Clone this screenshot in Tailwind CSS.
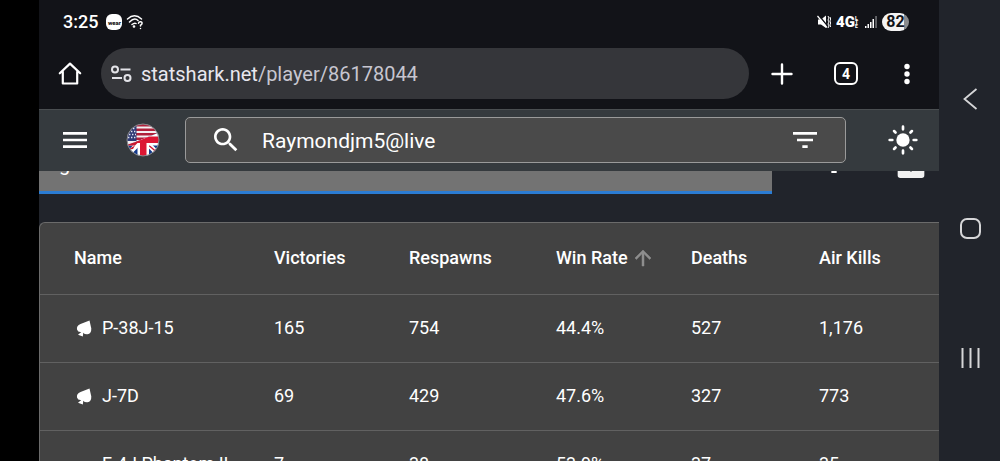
<!DOCTYPE html>
<html lang="en">
<head>
    <meta charset="UTF-8">
    <meta name="viewport" content="width=device-width, initial-scale=1.0">
    <title>StatShark</title>
    <script src="https://cdn.jsdelivr.net/npm/@tailwindcss/browser@4"></script>
</head>
<body class="flex h-screen overflow-hidden bg-black font-['Roboto',sans-serif] text-white">
    <div class="w-[39px] shrink-0 bg-black"></div>

    <div class="flex min-w-0 flex-1 flex-col overflow-hidden bg-[#21242b]">
        <!-- status bar -->
        <div class="flex h-11 shrink-0 items-center justify-between bg-[#121318] pr-[30px] pl-6">
            <div class="flex items-center gap-2">
                <span class="text-lg font-medium">3:25</span>
                <span class="flex size-4 items-center justify-center rounded-md bg-white text-[6px] font-bold text-black">wear</span>
                <svg class="-ml-1 h-4 w-[18px]" viewBox="0 0 18 16" fill="none" stroke="#fff" stroke-width="1.5" stroke-linecap="round">
                    <path d="M1.5 5Q8.500-1.500 15.500 5M3.500 8Q8.500 3 12 6.500M6 10.500Q8.500 8.500 10 9.500" />
                    <circle cx="8" cy="12.500" r="0.600" fill="#fff" />
                    <path d="M12.500 9.200Q12.800 7.700 14.500 7.800Q16.300 8 16 9.600Q15.800 10.500 14.500 11.200V12M14.500 14.400V14.500" />
                </svg>
            </div>
            <div class="flex items-center gap-[5px]">
                <svg class="h-4 w-[14px]" viewBox="0 0 14 16">
                    <path d="M1 5.500H4L9 1.500V14L4 10.500H1Z" fill="#fff" />
                    <path d="M1.500 1L10.500 12" stroke="#121318" stroke-width="1.500" />
                    <path d="M0.500 2L10 13.500" stroke="#fff" stroke-width="1.200" />
                    <path d="M11 2L12 4L11 6L12 8L11 10L12 12L11 14M13 3L13.600 5L13 7L13.600 9L13 11L13.600 13" fill="none" stroke="#fff" />
                </svg>
                <span class="flex w-6 items-center">
                    <span class="text-[15px] leading-4 font-black">4G</span>
                    <span class="flex flex-col text-[5px] leading-[4px] font-black"><span>L</span><span>T</span><span>E</span></span>
                </span>
                <svg class="h-3 w-3" viewBox="0 0 12 12" fill="#fff">
                    <path d="M0 10H1.500V12H0ZM2.500 8H4V12H2.500ZM5 6H6.500V12H5ZM7.500 3H9V12H7.500Z" />
                    <path d="M10.300 0H11.800V12H10.300Z" fill="#77787b" />
                </svg>
                <span class="flex h-[18px] w-[27px] items-center justify-center rounded-full bg-linear-to-r from-[#f4f4f4] from-82% to-[#8a8b8d] to-82% text-base font-bold text-[#121318]">82</span>
            </div>
        </div>

        <!-- browser toolbar -->
        <div class="flex h-[65px] shrink-0 items-center bg-[#121318] pr-5 pb-[6px] pl-[18px]">
            <button type="button" aria-label="Home">
                <svg class="size-[26px]" viewBox="0 0 26 26" fill="none" stroke="#fff" stroke-width="2.200" stroke-linejoin="round" stroke-linecap="round">
                    <path d="M2.800 12.300L13 2.600L23.200 12.300M5.800 10.500V22.500H20.200V10.500" />
                </svg>
            </button>
            <div class="ml-[18px] flex h-[51px] flex-1 items-center gap-2 rounded-full bg-[#35363a] pl-[10px]">
                <svg class="h-5 w-[22px] shrink-0" viewBox="0 0 22 20" fill="none" stroke="#e3e3e8" stroke-width="2">
                    <circle cx="4" cy="5.500" r="3" />
                    <path d="M9.500 5.500H19.500M1 14H11" />
                    <circle cx="16.500" cy="14" r="3" />
                </svg>
                <div class="text-xl text-[#c7c6d0]"><span class="text-[#e8e7ef]">statshark.net</span>/player/86178044</div>
            </div>
            <button type="button" aria-label="New tab" class="ml-[22px]">
                <svg class="size-[22px]" viewBox="0 0 22 22" stroke="#fff" stroke-width="2.400" stroke-linecap="round">
                    <path d="M11 1.500V20.500M1.500 11H20.500" />
                </svg>
            </button>
            <button type="button" class="ml-[41px] flex h-[23px] w-6 items-center justify-center rounded-md border-2 border-white text-sm font-bold">4</button>
            <button type="button" aria-label="Menu" class="ml-[37px]">
                <svg class="size-6" viewBox="0 0 24 24" fill="#fff">
                    <circle cx="12" cy="4.500" r="2.700" /><circle cx="12" cy="12" r="2.700" /><circle cx="12" cy="19.500" r="2.700" />
                </svg>
            </button>
        </div>

        <!-- site header -->
        <header class="flex h-[62px] shrink-0 items-center border-t border-[#4a4e51] bg-[#353a3e] pr-5 pb-[2px] pl-5">
            <button type="button" aria-label="Open navigation">
                <svg class="size-8" viewBox="0 0 24 24" fill="#fff"><path d="M3 18h18v-2H3v2zm0-5h18v-2H3v2zm0-7v2h18V6H3z" /></svg>
            </button>
            <button type="button" aria-label="Language" class="ml-[35px]">
                <svg class="size-[34px]" viewBox="0 0 34 34">
                    <defs>
                        <clipPath id="disc"><circle cx="17" cy="17" r="16" /></clipPath>
                        <clipPath id="lower"><path d="M0 23L34 9V34H0Z" /></clipPath>
                    </defs>
                    <g clip-path="url(#disc)">
                        <path d="M0 0H34V34H0Z" fill="#f4f1f3" />
                        <path d="M0 1H34V3.500H0ZM0 5.500H34V8H0ZM0 10H34V12.500H0ZM0 14.500H34V17H0Z" fill="#b0203a" />
                        <path d="M0 0H10.500V18H0Z" fill="#2f3a75" />
                        <path d="M4 5.500H10M2 8.500H10M3 11.500H10M2 14.500H10" stroke="#dfe3f2" stroke-width="1.400" stroke-dasharray="1.400 1.600" />
                        <g clip-path="url(#lower)">
                            <path d="M0 9H34V34H0Z" fill="#143a8c" />
                            <path d="M17 16L0 33M17 16L34 33" stroke="#fff" stroke-width="5" />
                            <path d="M20 20L34 32" stroke="#d2142e" stroke-width="1.400" />
                            <path d="M0 9H34V22.500H0ZM11.500 12H23V34H11.500Z" fill="#fff" />
                            <path d="M14 14H20.500V34H14ZM10 13.500H34V20H10Z" fill="#dc1633" />
                        </g>
                        <path d="M0 22L14 17.500L9 22.500H0ZM1 27L9 22.500L7 26Z" fill="#c91a32" />
                    </g>
                    <circle cx="17" cy="17" r="16" fill="none" stroke="#85888c" />
                </svg>
            </button>
            <div class="ml-[25px] flex h-[46px] flex-1 items-center rounded-[5px] border border-[#9a9a9a] bg-[#4a4a4a] px-6">
                <svg class="size-8 shrink-0" viewBox="0 0 24 24" fill="#fff"><path d="M15.500 14h-.79l-.28-.27C15.410 12.590 16 11.110 16 9.500 16 5.910 13.090 3 9.500 3S3 5.910 3 9.500 5.910 16 9.500 16c1.610 0 3.090-.59 4.230-1.570l.27.28v.79l5 4.990L20.490 19l-4.990-5zm-6 0C7.010 14 5 11.990 5 9.500S7.010 5 9.500 5 14 7.010 14 9.500 11.990 14 9.500 14z" /></svg>
                <input type="text" aria-label="Search player" value="Raymondjm5@live" class="ml-5 min-w-0 flex-1 bg-transparent pt-1 text-[21px] outline-none">
                <button type="button" aria-label="Filter">
                    <svg class="size-8" viewBox="0 0 24 24" fill="#fff"><path d="M10 18h4v-2h-4v2zM3 6v2h18V6H3zm3 7h12v-2H6v2z" /></svg>
                </button>
            </div>
            <button type="button" aria-label="Light mode" class="ml-[41px]">
                <svg class="size-8" viewBox="0 0 24 24" fill="none" stroke="#fff" stroke-width="2" stroke-linecap="round">
                    <circle cx="12" cy="12" r="5" fill="#fff" stroke="none" />
                    <path d="M12 2V4M12 20V22M2 12H4M20 12H22M5.300 5.300L6.400 6.400M17.600 17.600L18.700 18.700M5.300 18.700L6.400 17.600M17.600 6.400L18.700 5.300" />
                </svg>
            </button>
        </header>

        <!-- vehicle filter, scrolled under the header -->
        <div class="flex h-[23px] shrink-0 items-end overflow-hidden">
            <input type="text" aria-label="Vehicle filter" value="g" class="h-14 min-w-0 flex-1 border-b-3 border-[#2b7cd3] bg-[#737373] px-5 pb-[2px] text-xl outline-none">
            <div class="flex w-[167px] shrink-0 items-end justify-between pr-3 pl-[46px]">
                <button type="button" aria-label="Filter list" class="pb-[13px]">
                    <svg class="size-8" viewBox="0 0 24 24" fill="#fff"><path d="M10 18h4v-2h-4v2zM3 6v2h18V6H3zm3 7h12v-2H6v2z" /></svg>
                </button>
                <button type="button" aria-label="Export" class="pb-3">
                    <svg class="size-8" viewBox="0 0 24 24" fill="#f1f1f1"><path d="M4 3H20Q22 3 22 5V19Q22 21 20 21H4Q2 21 2 19V5Q2 3 4 3ZM12 16.500L16 12H13.500V7H10.500V12H8Z" fill-rule="evenodd" /></svg>
                </button>
            </div>
        </div>

        <!-- vehicle stats -->
        <div class="mt-7 shrink-0 rounded-tl-md border-t border-l border-[#6b6b6b] bg-[#424242]">
            <table class="w-full table-fixed text-left text-lg">
                <thead>
                    <tr class="h-[71px] border-b border-[#616161]">
                        <th class="w-[200px] pl-[34px] font-medium">Name</th>
                        <th class="w-[135px] pl-[34px] font-medium">Victories</th>
                        <th class="w-[147px] pl-[34px] font-medium">Respawns</th>
                        <th class="w-[135px] pl-[34px] font-medium">
                            <button type="button" class="flex items-center gap-[3px] whitespace-nowrap">Win Rate
                                <svg class="size-6 shrink-0" viewBox="0 0 24 24" fill="#8e8e8e"><path d="M4 12l1.410 1.410L11 7.830V20h2V7.830l5.580 5.590L20 12l-8-8-8 8z" stroke="#8e8e8e" stroke-width="0.500" /></svg>
                            </button>
                        </th>
                        <th class="w-[128px] pl-[34px] font-medium">Deaths</th>
                        <th class="pl-[34px] font-medium">Air Kills</th>
                    </tr>
                </thead>
                <tbody>
                    <tr class="h-[68px] border-b border-[#616161]">
                        <td class="pl-[34px]">
                            <div class="flex items-center gap-2">
                                <svg class="size-5" viewBox="0 0 20 20" fill="#fff"><path d="M15.500 2.500L17.300 10.500Q17.500 15.500 13.500 16.300Q10.500 16.500 9.300 14.800L8.800 18.500L4 16.800L7.300 14Q4 14.500 3 11.500Q2.300 7.500 6.500 6Z" /></svg>
                                P-38J-15
                            </div>
                        </td>
                        <td class="pl-[34px]">165</td>
                        <td class="pl-[34px]">754</td>
                        <td class="pl-[34px]">44.4%</td>
                        <td class="pl-[34px]">527</td>
                        <td class="pl-[34px]">1,176</td>
                    </tr>
                    <tr class="h-[68px] border-b border-[#616161]">
                        <td class="pl-[34px]">
                            <div class="flex items-center gap-2">
                                <svg class="size-5" viewBox="0 0 20 20" fill="#fff"><path d="M15.500 2.500L17.300 10.500Q17.500 15.500 13.500 16.300Q10.500 16.500 9.300 14.800L8.800 18.500L4 16.800L7.300 14Q4 14.500 3 11.500Q2.300 7.500 6.500 6Z" /></svg>
                                J-7D
                            </div>
                        </td>
                        <td class="pl-[34px]">69</td>
                        <td class="pl-[34px]">429</td>
                        <td class="pl-[34px]">47.6%</td>
                        <td class="pl-[34px]">327</td>
                        <td class="pl-[34px]">773</td>
                    </tr>
                    <tr class="h-[68px] border-b border-[#616161]">
                        <td class="pl-[62px] whitespace-nowrap">F-4J Phantom II</td>
                        <td class="pl-[34px]">7</td>
                        <td class="pl-[34px]">38</td>
                        <td class="pl-[34px]">53.9%</td>
                        <td class="pl-[34px]">37</td>
                        <td class="pl-[34px]">35</td>
                    </tr>
                </tbody>
            </table>
        </div>
    </div>

    <!-- system navigation -->
    <nav class="flex w-[61px] shrink-0 flex-col items-center justify-between bg-[#21242b] pt-[87px] pb-[91px] pl-[2px]">
        <button type="button" aria-label="Back">
            <svg class="size-6" viewBox="0 0 24 24" fill="none" stroke="#d6d6d8" stroke-width="1.800"><path d="M17.500 2L5.500 12L17.500 22" /></svg>
        </button>
        <button type="button" aria-label="Home screen" class="size-[21px] rounded-[7px] border-2 border-[#d6d6d8]"></button>
        <button type="button" aria-label="Recent apps">
            <svg class="size-6" viewBox="0 0 24 24" stroke="#d6d6d8" stroke-width="2"><path d="M3.500 2V22M11.500 2V22M19.500 2V22" /></svg>
        </button>
    </nav>
</body>
</html>
